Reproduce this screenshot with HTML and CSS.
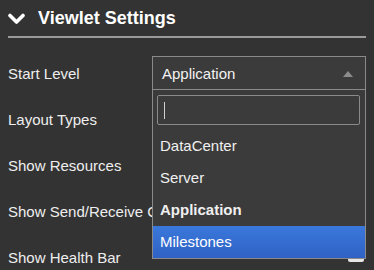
FILE: index.html
```html
<!DOCTYPE html>
<html lang="en">
<head>
    <meta charset="UTF-8">
    <title>Viewlet Settings</title>
    <link rel="stylesheet" href="styles.css">
</head>
<body>
    <div class="panel">
        <div class="panel-header">
            <svg class="chevron" width="17" height="12" viewBox="0 0 17 12">
                <path d="M2 2.5 L8.5 9 L15 2.5" fill="none" stroke="#fff" stroke-width="3.6" stroke-linecap="round" stroke-linejoin="round"/>
            </svg>
            <span class="panel-title">Viewlet Settings</span>
        </div>

        <div class="settings">
            <div class="row">
                <label>Start Level</label>
                <div class="select-wrap">
                    <div class="select open">
                        <span>Application</span>
                        <span class="arrow"></span>
                    </div>
                    <div class="dropdown">
                        <div class="search"><div class="search-box"><span class="caret"></span></div></div>
                        <ul class="options">
                            <li>DataCenter</li>
                            <li>Server</li>
                            <li class="selected">Application</li>
                            <li class="highlighted">Milestones</li>
                        </ul>
                    </div>
                </div>
            </div>
            <div class="row">
                <label>Layout Types</label>
                <div class="select"><span>Default</span></div>
            </div>
            <div class="row">
                <label>Show Resources</label>
                <div class="check-cell"><span class="check"></span></div>
            </div>
            <div class="row">
                <label>Show Send/Receive Counts</label>
                <div class="check-cell"><span class="check"></span></div>
            </div>
            <div class="row">
                <label>Show Health Bar</label>
                <div class="check-cell"><span class="check"></span></div>
            </div>
        </div>
    </div>
</body>
</html>
```

FILE: styles.css
```css
html, body {
    margin: 0;
    background: #333333;
    overflow: hidden;
}
body {
    font-family: "Liberation Sans", Arial, sans-serif;
    color: #eeeeee;
    padding: 0 8px;
}
.panel-header {
    display: flex;
    align-items: center;
    height: 36px;
    border-bottom: 2px solid #9a9a9a;
}
.chevron {
    margin-right: 13px;
    margin-top: 2px;
}
.panel-title {
    font-size: 18px;
    font-weight: bold;
    color: #ffffff;
}
.settings {
    padding-top: 12px;
}
.row {
    display: grid;
    grid-template-columns: 144px 1fr;
    align-items: center;
    height: 46px;
}
.row label {
    font-size: 15px;
    white-space: nowrap;
    overflow: hidden;
}
.select-wrap {
    position: relative;
}
.select {
    display: flex;
    align-items: center;
    justify-content: space-between;
    height: 32px;
    padding: 0 12px 0 9px;
    border: 1px solid #8a8a8a;
    background: #3b3b3b;
    font-size: 15px;
    color: #f2f2f2;
}
.arrow {
    width: 0;
    height: 0;
    border-left: 5px solid transparent;
    border-right: 5px solid transparent;
    border-bottom: 6px solid #8c8c8c;
    margin-top: 1px;
}
.dropdown {
    position: absolute;
    z-index: 2;
    top: 34px;
    left: 0;
    right: 0;
    background: #3b3b3b;
    border: 1px solid #8a8a8a;
    border-top: none;
}
.search {
    padding: 5px 5px 5px 4px;
}
.search-box {
    display: flex;
    align-items: center;
    box-sizing: border-box;
    height: 30px;
    border: 1px solid #8a8a8a;
    border-radius: 2px;
    padding-left: 6px;
}
.caret {
    width: 1px;
    height: 17px;
    background: #d0d0d0;
}
.options {
    list-style: none;
    margin: 0;
    padding: 0;
}
.options li {
    height: 32px;
    line-height: 32px;
    padding-left: 7px;
    font-size: 15px;
    color: #f0f0f0;
}
.options li.selected {
    font-weight: bold;
}
.options li.highlighted {
    background: linear-gradient(#3a78db, #2f62c4);
    color: #ffffff;
}
.check-cell {
    display: flex;
    justify-content: flex-end;
    align-self: start;
}
.check {
    width: 16px;
    height: 16px;
    background: #e6e6e6;
    border-radius: 2px;
    margin-right: 2px;
    margin-top: 12px;
}
```
